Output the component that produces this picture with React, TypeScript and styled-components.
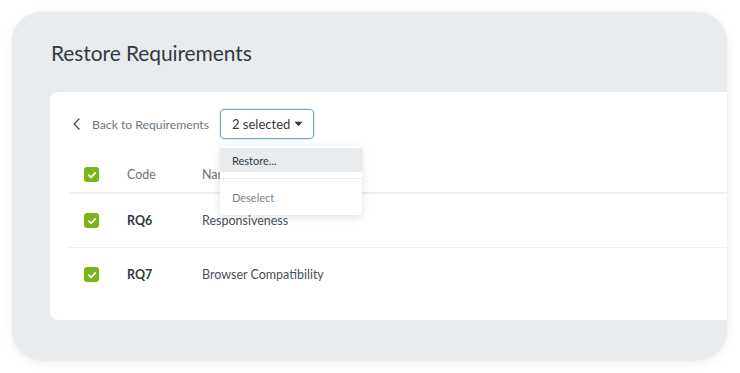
import React from "react";
import styled, { createGlobalStyle } from "styled-components";

const Global = createGlobalStyle`
  html, body { margin: 0; padding: 0; background: #ffffff; }
  body { font-family: "Lato", "Noto Sans", sans-serif; -webkit-font-smoothing: antialiased; }
  * { box-sizing: border-box; }
`;

const Page = styled.div`
  width: 740px;
  height: 373px;
  padding: 12px 13px 13px 12px;
`;

const Frame = styled.div`
  width: 715px;
  height: 348px;
  background: #e9ecef;
  border-radius: 30px;
  box-shadow: 0 2px 10px rgba(0, 0, 0, 0.07), 0 0 0 1px rgba(0, 0, 0, 0.02);
  overflow: hidden;
  padding: 27px 0 40px 38px;
  display: flex;
  flex-direction: column;
`;

const Title = styled.h1`
  margin: 0 0 25px 1px;
  font-size: 21px;
  line-height: 28px;
  font-weight: 400;
  color: #343a40;
  letter-spacing: -0.1px;
`;

const Card = styled.div`
  flex: 1;
  background: #ffffff;
  border-radius: 8px 0 0 8px;
  padding: 17px 0 19px 19px;
  display: flex;
  flex-direction: column;
`;

const Toolbar = styled.div`
  display: flex;
  align-items: center;
  height: 30px;
  padding-left: 4px;
  margin-bottom: 18px;
`;

const BackLink = styled.a`
  display: flex;
  align-items: center;
  gap: 12px;
  width: 147px;
  color: #6c757d;
  font-size: 12.2px;
  cursor: pointer;
`;

const DropWrap = styled.div`
  position: relative;
`;

const DropButton = styled.button`
  height: 30px;
  width: 94px;
  border: 1.5px solid #6e9ed8;
  border-radius: 4px;
  background: #fff;
  box-shadow: 0 0 0 1px rgba(205, 225, 160, 0.35);
  display: flex;
  align-items: center;
  justify-content: space-between;
  padding: 0 10px 0 11px;
  font-family: inherit;
  font-size: 13px;
  font-weight: 400;
  color: #343a40;
`;

const Menu = styled.div`
  position: absolute;
  top: 37px;
  left: 0;
  width: 142px;
  background: #fff;
  border-radius: 4px;
  box-shadow: 0 2px 8px rgba(0, 0, 0, 0.12);
  padding: 2px 0 6px;
  z-index: 5;
`;

const MenuItem = styled.div<{ $active?: boolean; $muted?: boolean }>`
  height: 24px;
  display: flex;
  align-items: center;
  padding-left: 12px;
  font-size: 11px;
  color: ${(p) => (p.$muted ? "#7b8590" : "#343a40")};
  background: ${(p) => (p.$active ? "#e9ecef" : "transparent")};
`;

const MenuDivider = styled.div`
  height: 1px;
  background: #e9ecef;
  margin: 6px 0 6px;
`;

const Table = styled.div`
  display: flex;
  flex-direction: column;
`;

const Row = styled.div<{ $head?: boolean }>`
  display: grid;
  grid-template-columns: 58px 75px 1fr;
  align-items: center;
  height: ${(p) => (p.$head ? "36px" : "54px")};
  border-bottom: ${(p) => (p.$head ? "1px solid #edf0f2" : "none")};
  & + & {
    border-top: ${(p) => (p.$head ? "none" : "1px solid #edf0f2")};
  }
`;

const Cell = styled.div<{ $bold?: boolean; $muted?: boolean }>`
  font-size: 12.5px;
  font-weight: ${(p) => (p.$bold ? 700 : 400)};
  color: ${(p) => (p.$bold ? "#343a40" : p.$muted ? "#6c757d" : "#495057")};
  white-space: nowrap;
`;

const CheckCell = styled.div`
  padding-left: 15px;
  display: flex;
  align-items: center;
`;

const Check = styled.span`
  width: 15px;
  height: 15px;
  border-radius: 3px;
  background: #7cb518;
  display: inline-flex;
  align-items: center;
  justify-content: center;
`;

const CheckBox = () => (
  <Check>
    <svg width="10" height="10" viewBox="0 0 10 10" fill="none">
      <path d="M1.8 5.2 L4 7.3 L8.3 2.8" stroke="#fff" strokeWidth="1.7" strokeLinecap="round" strokeLinejoin="round" />
    </svg>
  </Check>
);

const rows = [
  { code: "RQ6", name: "Responsiveness" },
  { code: "RQ7", name: "Browser Compatibility" },
];

export default function App() {
  return (
    <>
      <Global />
      <Page>
        <Frame>
          <Title>Restore Requirements</Title>
          <Card>
            <Toolbar>
              <BackLink>
                <svg width="7" height="12" viewBox="0 0 7 12" fill="none">
                  <path d="M6 1 L1.2 6 L6 11" stroke="#495057" strokeWidth="1.4" strokeLinecap="round" strokeLinejoin="round" />
                </svg>
                Back to Requirements
              </BackLink>
              <DropWrap>
                <DropButton>
                  2 selected
                  <svg width="9" height="6" viewBox="0 0 9 6">
                    <path d="M0.5 0.8 L8.5 0.8 L4.5 5.2 Z" fill="#343a40" />
                  </svg>
                </DropButton>
                <Menu>
                  <MenuItem $active>Restore...</MenuItem>
                  <MenuDivider />
                  <MenuItem $muted>Deselect</MenuItem>
                </Menu>
              </DropWrap>
            </Toolbar>
            <Table>
              <Row $head>
                <CheckCell><CheckBox /></CheckCell>
                <Cell $muted>Code</Cell>
                <Cell $muted>Name</Cell>
              </Row>
              {rows.map((r) => (
                <Row key={r.code}>
                  <CheckCell><CheckBox /></CheckCell>
                  <Cell $bold>{r.code}</Cell>
                  <Cell>{r.name}</Cell>
                </Row>
              ))}
            </Table>
          </Card>
        </Frame>
      </Page>
    </>
  );
}
